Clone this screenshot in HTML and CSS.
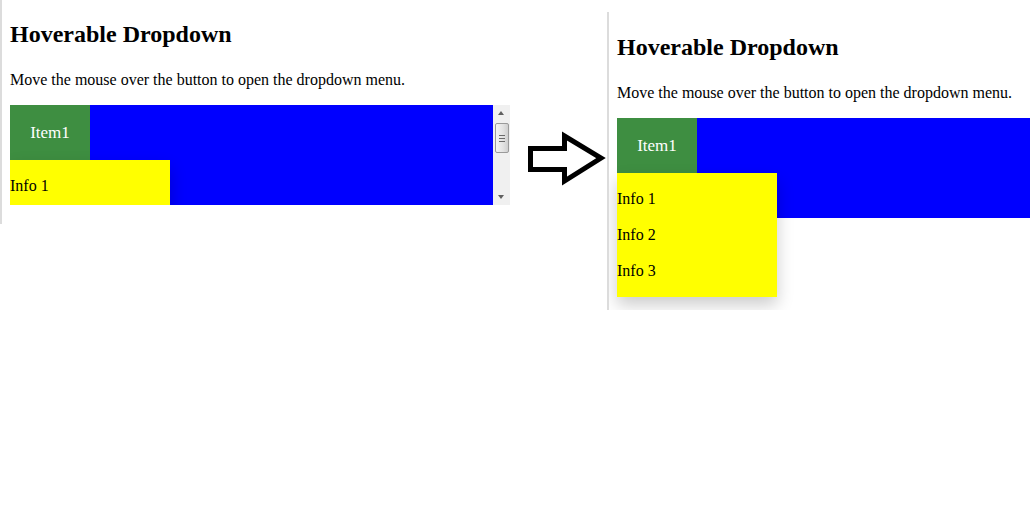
FILE: index.html
```html
<!DOCTYPE html>
<html>
<head>
<meta charset="utf-8">
<link rel="stylesheet" href="styles.css">
</head>
<body>
<div class="page">
  <div class="panel panel-left">
    <h2 class="title">Hoverable Dropdown</h2>
    <p class="lead">Move the mouse over the button to open the dropdown menu.</p>
    <div class="frame">
      <div class="viewport">
        <div class="nav">
          <div class="dropbtn">Item1</div>
        </div>
        <div class="menu">
          <div class="menu-item">Info 1</div>
        </div>
      </div>
      <div class="sbar">
        <div class="sbar-arrow up"></div>
        <div class="sbar-thumb"><span></span><span></span><span></span></div>
        <div class="sbar-fill"></div>
        <div class="sbar-arrow down"></div>
      </div>
    </div>
  </div>
  <div class="arrow">
    <svg width="80" height="60" viewBox="0 0 80 60">
      <polygon points="3.5,21.5 37.5,21.5 37.5,9 74,31 37.5,54 37.5,42.5 3.5,42.5" fill="#fff" stroke="#000" stroke-width="5" stroke-linejoin="miter"/>
    </svg>
  </div>
  <div class="panel panel-right">
    <h2 class="title">Hoverable Dropdown</h2>
    <p class="lead">Move the mouse over the button to open the dropdown menu.</p>
    <div class="frame">
      <div class="viewport open">
        <div class="nav">
          <div class="dropbtn">Item1</div>
        </div>
        <div class="menu">
          <div class="menu-item">Info 1</div>
          <div class="menu-item">Info 2</div>
          <div class="menu-item">Info 3</div>
        </div>
      </div>
    </div>
  </div>
</div>
</body>
</html>
```
FILE: styles.css
```css
* { box-sizing: border-box; }
body {
  margin: 0;
  background: #fff;
  font-family: "Liberation Serif", "Times New Roman", serif;
  font-size: 16px;
  color: #000;
}
.page {
  display: flex;
  align-items: flex-start;
}
.panel {
  border-left: 2px solid #dcdcdc;
  padding-left: 8px;
}
.panel-left {
  width: 520px;
  height: 224px;
}
.panel-right {
  flex: 1;
  margin-top: 12px;
  height: 298px;
  padding-left: 8px;
  overflow: hidden;
}
.title {
  font-size: 24px;
  font-weight: bold;
  margin: 20px 0 23px;
  line-height: 28px;
}
.panel-right .title { margin-top: 21px; }
.lead {
  margin: 0 0 16px;
  line-height: 18px;
}
.frame {
  display: flex;
  height: 100px;
}
.panel-left .frame { width: 500px; }
.viewport {
  flex: 1;
  position: relative;
  background: #0000ff;
  height: 100px;
}
.panel-left .viewport { overflow: hidden; }
.nav { display: flex; }
.dropbtn {
  width: 80px;
  height: 55px;
  background: #3e8e41;
  color: #fff;
  font-size: 17px;
  display: flex;
  align-items: center;
  justify-content: center;
}
.menu {
  position: absolute;
  left: 0;
  top: 55px;
  width: 160px;
  background: #ffff00;
  padding: 8px 0;
  box-shadow: 0 8px 16px 0 rgba(0,0,0,0.2);
  z-index: 2;
}
.menu-item {
  line-height: 18px;
  padding: 9px 0;
}
.sbar {
  width: 17px;
  height: 100px;
  background: #f0f0f0;
  display: flex;
  flex-direction: column;
  align-items: center;
}
.sbar-arrow {
  width: 17px;
  height: 17px;
  position: relative;
}
.sbar-arrow::after {
  content: "";
  position: absolute;
  left: 5px;
  border-left: 3.5px solid transparent;
  border-right: 3.5px solid transparent;
}
.sbar-arrow.up::after { top: 6px; border-bottom: 4px solid #606060; }
.sbar-arrow.down::after { top: 7px; border-top: 4px solid #606060; }
.sbar-thumb {
  width: 14px;
  height: 30px;
  margin-top: 1px;
  border: 1px solid #9a9a9a;
  border-radius: 2px;
  background: linear-gradient(to right, #f4f4f4, #e2e2e2 60%, #cfcfcf);
  display: flex;
  flex-direction: column;
  align-items: center;
  justify-content: center;
  gap: 2px;
}
.sbar-thumb span {
  display: block;
  width: 6px;
  height: 1px;
  background: #6a6a6a;
}
.sbar-fill { flex: 1; }
.arrow {
  width: 87px;
  padding-top: 127px;
  padding-left: 7px;
}
.arrow svg { display: block; }
```
